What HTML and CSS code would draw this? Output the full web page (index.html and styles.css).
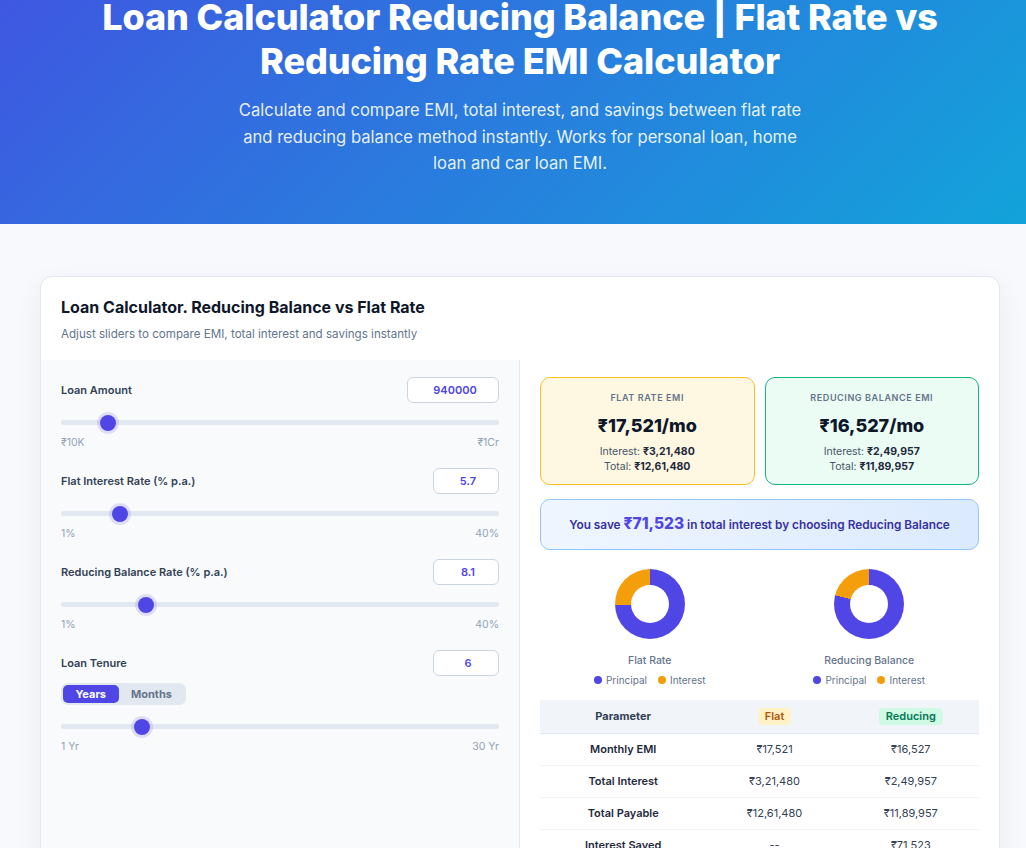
FILE: index.html
```html
<!DOCTYPE html>
<html lang="en">
    <head>
        <meta charset="UTF-8" />
        <meta name="viewport" content="width=device-width, initial-scale=1.0" />
        <title>Loan Calculator Reducing Balance | Flat Rate vs Reducing Rate EMI Calculator</title>
        <link rel="stylesheet" href="styles.css">
    </head>
    <body>
        <header class="hero">
            <h1>Loan Calculator Reducing Balance | Flat Rate vs Reducing Rate EMI Calculator</h1>
            <p>Calculate and compare EMI, total interest, and savings between flat rate and reducing balance method instantly. Works for personal loan, home loan and car loan EMI.</p>
        </header>

        <main class="container">
            <section class="calc-card">
                <div class="calc-head">
                    <h2>Loan Calculator. Reducing Balance vs Flat Rate</h2>
                    <p>Adjust sliders to compare EMI, total interest and savings instantly</p>
                </div>

                <div class="calc-body">
                    <div class="inputs">
                        <div class="field">
                            <div class="field-top">
                                <label for="amount">Loan Amount</label>
                                <input class="num wide" id="amount" type="text" value="940000" />
                            </div>
                            <input class="slider" type="range" min="10000" max="10000000" step="10000" value="940000" />
                            <div class="range-labels"><span>₹10K</span><span>₹1Cr</span></div>
                        </div>

                        <div class="field">
                            <div class="field-top">
                                <label for="flatRate">Flat Interest Rate (% p.a.)</label>
                                <input class="num" id="flatRate" type="text" value="5.7" />
                            </div>
                            <input class="slider" type="range" min="1" max="40" step="0.1" value="5.7" />
                            <div class="range-labels"><span>1%</span><span>40%</span></div>
                        </div>

                        <div class="field">
                            <div class="field-top">
                                <label for="redRate">Reducing Balance Rate (% p.a.)</label>
                                <input class="num" id="redRate" type="text" value="8.1" />
                            </div>
                            <input class="slider" type="range" min="1" max="40" step="0.1" value="8.1" />
                            <div class="range-labels"><span>1%</span><span>40%</span></div>
                        </div>

                        <div class="field">
                            <div class="field-top">
                                <label for="tenure">Loan Tenure</label>
                                <input class="num" id="tenure" type="text" value="6" />
                            </div>
                            <div class="toggle">
                                <button class="active">Years</button>
                                <button>Months</button>
                            </div>
                            <input class="slider" type="range" min="1" max="30" step="1" value="6" />
                            <div class="range-labels"><span>1 Yr</span><span>30 Yr</span></div>
                        </div>
                    </div>

                    <div class="results">
                        <div class="emi-cards">
                            <div class="emi-card flat">
                                <div class="emi-label">Flat Rate EMI</div>
                                <div class="emi-value">₹17,521/mo</div>
                                <div class="emi-line">Interest: <b>₹3,21,480</b></div>
                                <div class="emi-line">Total: <b>₹12,61,480</b></div>
                            </div>
                            <div class="emi-card reducing">
                                <div class="emi-label">Reducing Balance EMI</div>
                                <div class="emi-value">₹16,527/mo</div>
                                <div class="emi-line">Interest: <b>₹2,49,957</b></div>
                                <div class="emi-line">Total: <b>₹11,89,957</b></div>
                            </div>
                        </div>

                        <div class="savings">
                            You save <strong>₹71,523</strong> in total interest by choosing Reducing Balance
                        </div>

                        <div class="charts">
                            <div class="chart">
                                <div class="donut" style="--p: 74.52%"></div>
                                <div class="chart-title">Flat Rate</div>
                                <div class="legend">
                                    <span><i class="dot principal"></i>Principal</span>
                                    <span><i class="dot interest"></i>Interest</span>
                                </div>
                            </div>
                            <div class="chart">
                                <div class="donut" style="--p: 78.99%"></div>
                                <div class="chart-title">Reducing Balance</div>
                                <div class="legend">
                                    <span><i class="dot principal"></i>Principal</span>
                                    <span><i class="dot interest"></i>Interest</span>
                                </div>
                            </div>
                        </div>

                        <table class="compare">
                            <thead>
                                <tr>
                                    <th>Parameter</th>
                                    <th><span class="badge flat">Flat</span></th>
                                    <th><span class="badge reducing">Reducing</span></th>
                                </tr>
                            </thead>
                            <tbody>
                                <tr>
                                    <td>Monthly EMI</td>
                                    <td>₹17,521</td>
                                    <td>₹16,527</td>
                                </tr>
                                <tr>
                                    <td>Total Interest</td>
                                    <td>₹3,21,480</td>
                                    <td>₹2,49,957</td>
                                </tr>
                                <tr>
                                    <td>Total Payable</td>
                                    <td>₹12,61,480</td>
                                    <td>₹11,89,957</td>
                                </tr>
                                <tr>
                                    <td>Interest Saved</td>
                                    <td>--</td>
                                    <td>₹71,523</td>
                                </tr>
                            </tbody>
                        </table>
                    </div>
                </div>
            </section>
        </main>
    </body>
</html>
```

FILE: styles.css
```css
body {
    font-family: Inter, "Noto Sans", sans-serif;
    background-color: #f7f9fc;
    color: #0f172a;
    margin: 0;
    min-width: 1040px;
    overflow-x: hidden;
}

.hero {
    background: linear-gradient(135deg, #3f57e1 0%, #12a4da 100%);
    color: #fff;
    text-align: center;
    padding: 0 20px 47px;
}

.hero h1 {
    font-size: 36px;
    font-weight: 800;
    line-height: 44px;
    letter-spacing: -0.1px;
    max-width: 900px;
    margin: -5px auto 14px;
}

.hero p {
    font-size: 16.6px;
    line-height: 26.5px;
    max-width: 580px;
    margin: 0 auto;
    color: rgba(255, 255, 255, 0.9);
}

.container {
    max-width: 960px;
    margin: 0 auto;
    padding: 52px 20px 40px;
}

.calc-card {
    background: #fff;
    border: 1px solid #e2e8f0;
    border-radius: 12px;
    box-shadow: 0 10px 30px rgba(15, 23, 42, 0.06);
    overflow: hidden;
}

.calc-head {
    padding: 18px 20px 17px;
}

.calc-head h2 {
    font-size: 16px;
    font-weight: 700;
    line-height: 24px;
    margin: 0 0 6px;
}

.calc-head p {
    font-size: 11.6px;
    line-height: 18px;
    color: #64748b;
    margin: 0;
}

.calc-body {
    display: grid;
    grid-template-columns: 1fr 1fr;
}

/* left side: sliders */
.inputs {
    background: #f8fafc;
    border-right: 1px solid #e2e8f0;
    padding: 17px 20px;
}

.field {
    margin-bottom: 18px;
}

.field-top {
    display: flex;
    justify-content: space-between;
    align-items: center;
    margin-bottom: 12px;
}

.field-top label {
    font-size: 11px;
    font-weight: 600;
    color: #334155;
}

.num {
    width: 66px;
    height: 26px;
    box-sizing: border-box;
    border: 1px solid #cbd5e1;
    border-radius: 6px;
    background: #fff;
    font-family: inherit;
    font-size: 11px;
    font-weight: 600;
    color: #4f46e5;
    text-align: center;
    padding: 0 4px 0 8px;
}

.num.wide {
    width: 92px;
}

.slider {
    -webkit-appearance: none;
    appearance: none;
    display: block;
    width: 100%;
    height: 16px;
    margin: 0;
    background: transparent;
}

.slider::-webkit-slider-runnable-track {
    height: 5px;
    border-radius: 3px;
    background: #e2e8f0;
}

.slider::-webkit-slider-thumb {
    -webkit-appearance: none;
    width: 16px;
    height: 16px;
    margin-top: -5.5px;
    border-radius: 50%;
    background: #4f46e5;
    box-shadow: 0 0 0 3px rgba(79, 70, 229, 0.15);
}

.range-labels {
    display: flex;
    justify-content: space-between;
    font-size: 10.5px;
    line-height: 14px;
    color: #94a3b8;
    margin-top: 5px;
}

.toggle {
    display: flex;
    width: fit-content;
    background: #e2e8f0;
    border-radius: 7px;
    padding: 2px;
    margin: -5px 0 14px;
}

.toggle button {
    border: 0;
    background: transparent;
    font-family: inherit;
    font-size: 11px;
    font-weight: 700;
    line-height: 18px;
    color: #64748b;
    padding: 0 12.5px;
    border-radius: 5px;
    cursor: pointer;
}

.toggle button.active {
    background: #4f46e5;
    color: #fff;
}

/* right side: results */
.results {
    padding: 17px 20px 20px;
}

.emi-cards {
    display: grid;
    grid-template-columns: 1fr 1fr;
    gap: 10px;
}

.emi-card {
    border: 1px solid;
    border-radius: 10px;
    text-align: center;
    padding: 13px 10px 10px;
}

.emi-card.flat {
    background: #fef7e1;
    border-color: #fbbf24;
}

.emi-card.reducing {
    background: #ebfcf4;
    border-color: #10b981;
}

.emi-label {
    font-size: 9px;
    font-weight: 600;
    line-height: 13px;
    letter-spacing: 0.6px;
    text-transform: uppercase;
    color: #64748b;
    margin-bottom: 10px;
}

.emi-value {
    font-size: 18px;
    font-weight: 800;
    line-height: 24px;
    margin-bottom: 6px;
}

.emi-line {
    font-size: 10.5px;
    line-height: 15px;
    color: #475569;
}

.emi-line b {
    color: #1e293b;
    font-weight: 700;
}

.savings {
    margin-top: 14px;
    border: 1px solid #93c5fd;
    border-radius: 10px;
    background: linear-gradient(90deg, #eff6ff, #dbeafe);
    text-align: center;
    font-size: 11.8px;
    font-weight: 600;
    line-height: 21px;
    color: #3730a3;
    padding: 13px;
}

.savings strong {
    font-size: 15.5px;
    font-weight: 800;
    color: #4f46e5;
}

.charts {
    display: grid;
    grid-template-columns: 1fr 1fr;
    margin: 19px 0 13px;
}

.chart {
    display: flex;
    flex-direction: column;
    align-items: center;
}

.donut {
    position: relative;
    width: 70px;
    height: 70px;
    border-radius: 50%;
    background: conic-gradient(#4f46e5 0 var(--p), #f59e0b 0 100%);
    margin-bottom: 14px;
}

.donut::after {
    content: "";
    position: absolute;
    inset: 16px;
    border-radius: 50%;
    background: #fff;
}

.chart-title {
    font-size: 10.5px;
    font-weight: 500;
    line-height: 15px;
    color: #64748b;
    margin-bottom: 5px;
}

.legend {
    display: flex;
    gap: 11px;
    font-size: 10px;
    line-height: 14px;
    color: #64748b;
}

.legend span {
    display: flex;
    align-items: center;
    gap: 4px;
}

.dot {
    width: 8px;
    height: 8px;
    border-radius: 50%;
}

.dot.principal {
    background: #4f46e5;
}

.dot.interest {
    background: #f59e0b;
}

.compare {
    width: 100%;
    table-layout: fixed;
    border-collapse: collapse;
    font-size: 11px;
    text-align: center;
}

.compare th {
    width: 30.8%;
    background: #f1f5f9;
    border-bottom: 1px solid #e2e8f0;
    color: #334155;
    font-weight: 700;
    line-height: 17px;
    padding: 8px;
}

.compare th:first-child {
    width: 38.4%;
}

.compare td {
    border-bottom: 1px solid #f1f5f9;
    color: #334155;
    line-height: 13px;
    padding: 9px 8px;
}

.compare td:first-child {
    color: #1e293b;
    font-weight: 600;
}

.badge {
    display: inline-block;
    padding: 0 7px;
    border-radius: 4px;
    font-weight: 600;
}

.badge.flat {
    background: #fef3c7;
    color: #b45309;
}

.badge.reducing {
    background: #d1fae5;
    color: #047857;
}
```
